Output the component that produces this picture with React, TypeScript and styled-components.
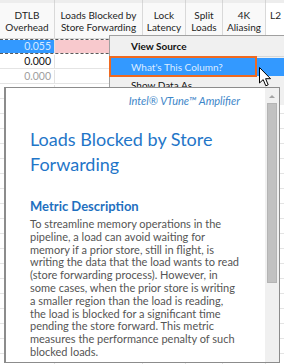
import React from "react";
import styled, { createGlobalStyle } from "styled-components";

const GlobalStyle = createGlobalStyle`
  html, body {
    margin: 0;
    padding: 0;
    background: #ffffff;
    overflow: hidden;
  }
`;

interface Column {
  title: string[];
  width: number;
}

const columns: Column[] = [
  { title: ["DTLB", "Overhead"], width: 55 },
  { title: ["Loads Blocked by", "Store Forwarding"], width: 88 },
  { title: ["Lock", "Latency"], width: 43 },
  { title: ["Split", "Loads"], width: 37 },
  { title: ["4K", "Aliasing"], width: 43 },
  { title: ["L2"], width: 40 },
];

const rows = [
  { value: "0.055", selected: true },
  { value: "0.000" },
  { value: "0.000", muted: true },
  ...Array.from({ length: 19 }, () => ({ value: "" })),
];

const Screen = styled.div`
  position: relative;
  width: 284px;
  height: 364px;
  overflow: hidden;
  background: #ffffff;
  font-family: Lato, "Noto Sans", sans-serif;
`;

const Grid = styled.div`
  display: flex;
  flex-direction: column;
  width: 320px;
`;

const TopStrip = styled.div`
  display: flex;
  height: 3px;
  background: #ededed;
`;

const StripCell = styled.div<{ $w: number }>`
  width: ${(p) => p.$w}px;
  flex: none;
  box-sizing: border-box;
  border-right: 1px solid #d4d4d4;
`;

const HeaderRow = styled.div`
  display: flex;
  height: 35px;
  border-bottom: 1px solid #d9d9d9;
`;

const HeaderCell = styled.div<{ $w: number; $top?: boolean }>`
  width: ${(p) => p.$w}px;
  flex: none;
  box-sizing: border-box;
  display: flex;
  flex-direction: column;
  align-items: ${(p) => (p.$top ? "flex-start" : "center")};
  justify-content: ${(p) => (p.$top ? "flex-start" : "center")};
  padding: ${(p) => (p.$top ? "6px 0 0 4px" : "0")};
  border-right: 1px solid #d9d9d9;
  background: ${(p) => (p.$top ? "#ffffff" : "#f9f9f9")};
  color: #1e1e1e;
  font-size: 10px;
  line-height: 12px;
  white-space: nowrap;
`;

const DataRow = styled.div<{ $focus?: boolean }>`
  display: flex;
  height: 15px;
  box-sizing: border-box;
  border-top: 1px ${(p) => (p.$focus ? "dashed #5a5a5a" : "solid transparent")};
  border-bottom: 1px ${(p) => (p.$focus ? "dashed #5a5a5a" : "solid #e4e4e4")};
`;

const DataCell = styled.div<{
  $w: number;
  $bg?: string;
  $color?: string;
  $edge?: boolean;
}>`
  width: ${(p) => p.$w}px;
  flex: none;
  box-sizing: border-box;
  padding-right: 3px;
  text-align: right;
  font-size: 10.5px;
  line-height: 13px;
  background: ${(p) => p.$bg || "transparent"};
  color: ${(p) => p.$color || "#111111"};
  border-right: 1px solid ${(p) => (p.$edge ? "#d8cf9c" : "#e2e2e2")};
`;

const Menu = styled.div`
  position: absolute;
  left: 109px;
  top: 35px;
  width: 190px;
  height: 70px;
  box-sizing: border-box;
  padding-top: 1px;
  background: #f0f0f0;
  border-left: 1px solid #a0a0a0;
  border-top: 1px solid #a0a0a0;
  display: flex;
  flex-direction: column;
`;

const MenuItem = styled.div<{ $bold?: boolean; $active?: boolean }>`
  height: 18px;
  display: flex;
  align-items: center;
  padding-left: 21px;
  font-size: 10px;
  font-weight: ${(p) => (p.$bold ? 700 : 400)};
  color: ${(p) => (p.$active ? "#dcecff" : "#111111")};
  background: ${(p) => (p.$active ? "#3399ff" : "transparent")};
`;

const MenuSeparator = styled.div`
  height: 1px;
  margin: 1px 0 1px 0;
  background: #d7d7d7;
`;

const FocusOutline = styled.div`
  position: absolute;
  left: 109px;
  top: 56px;
  width: 148px;
  height: 21px;
  box-sizing: border-box;
  border: 2px solid #f0691f;
`;

const Cursor = styled.svg`
  position: absolute;
  left: 259px;
  top: 67px;
`;

const Popup = styled.div`
  position: absolute;
  left: 4px;
  top: 87px;
  width: 276px;
  height: 276px;
  box-sizing: border-box;
  display: flex;
  background: #ffffff;
  border: 1px solid #8c8c8c;
  border-left: 2px solid #8c8c8c;
`;

const Content = styled.div`
  flex: 1;
  min-width: 0;
  overflow: hidden;
  padding: 7px 25px 0 24px;
`;

const Brand = styled.div`
  text-align: right;
  font-size: 11px;
  line-height: 12px;
  font-style: italic;
  color: #3d86c9;
`;

const Title = styled.h1`
  margin: 20px 0 0;
  font-size: 18px;
  line-height: 25px;
  font-weight: 400;
  color: #1f76c8;
`;

const SectionTitle = styled.h2`
  margin: 21px 0 0;
  font-size: 13px;
  line-height: 16px;
  font-weight: 700;
  color: #1f70c0;
`;

const Body = styled.p`
  margin: 4px 0 0;
  font-size: 11px;
  line-height: 12.8px;
  color: #555555;
`;

const Scrollbar = styled.div`
  width: 14px;
  flex: none;
  background: #f0f0f0;
  display: flex;
  flex-direction: column;
  align-items: center;
  padding-top: 7px;
  box-sizing: border-box;
`;

const ArrowUp = styled.div`
  width: 0;
  height: 0;
  border-left: 3px solid transparent;
  border-right: 3px solid transparent;
  border-bottom: 3px solid #a3a3a3;
`;

const Thumb = styled.div`
  margin-top: 5px;
  width: 10px;
  height: 180px;
  box-sizing: border-box;
  background: #c1c1c1;
  border: 1px solid #b4b4b4;
`;

const App: React.FC = () => {
  return (
    <Screen>
      <GlobalStyle />
      <Grid>
        <TopStrip>
          {columns.map((c) => (
            <StripCell key={c.title.join()} $w={c.width} />
          ))}
        </TopStrip>
        <HeaderRow>
          {columns.map((c) => (
            <HeaderCell
              key={c.title.join()}
              $w={c.width}
              $top={c.title.length === 1}
            >
              {c.title.map((line) => (
                <span key={line}>{line}</span>
              ))}
            </HeaderCell>
          ))}
        </HeaderRow>
        {rows.map((row, i) => (
          <DataRow key={i} $focus={row.selected}>
            {columns.map((c, j) => {
              if (j === 0) {
                return (
                  <DataCell
                    key={j}
                    $w={c.width}
                    $bg={row.selected ? "#3399ff" : undefined}
                    $color={
                      row.selected ? "#d6e9ff" : row.muted ? "#a0a0a0" : undefined
                    }
                  >
                    {row.value}
                  </DataCell>
                );
              }
              return (
                <DataCell
                  key={j}
                  $w={c.width}
                  $bg={row.selected && j === 1 ? "#f8c9cd" : undefined}
                  $edge={j === columns.length - 1}
                />
              );
            })}
          </DataRow>
        ))}
      </Grid>

      <Menu>
        <MenuItem $bold>View Source</MenuItem>
        <MenuSeparator />
        <MenuItem $active>What's This Column?</MenuItem>
        <MenuItem>Show Data As</MenuItem>
      </Menu>
      <FocusOutline />
      <Cursor width="13" height="20" viewBox="0 0 13 20">
        <path
          d="M0.5 0.5 L0.5 16 L4.2 12.6 L6.8 18.8 L9.2 17.8 L6.6 11.7 L11.5 11.7 Z"
          fill="#ffffff"
          stroke="#000000"
          strokeWidth="1"
          strokeLinejoin="round"
        />
      </Cursor>

      <Popup>
        <Content>
          <Brand>Intel® VTune™ Amplifier</Brand>
          <Title>Loads Blocked by Store Forwarding</Title>
          <SectionTitle>Metric Description</SectionTitle>
          <Body>
            To streamline memory operations in the pipeline, a load can avoid
            waiting for memory if a prior store, still in flight, is writing
            the data that the load wants to read (store forwarding process).
            However, in some cases, when the prior store is writing a smaller
            region than the load is reading, the load is blocked for a
            significant time pending the store forward. This metric measures
            the performance penalty of such blocked loads.
          </Body>
        </Content>
        <Scrollbar>
          <ArrowUp />
          <Thumb />
        </Scrollbar>
      </Popup>
    </Screen>
  );
};

export default App;
